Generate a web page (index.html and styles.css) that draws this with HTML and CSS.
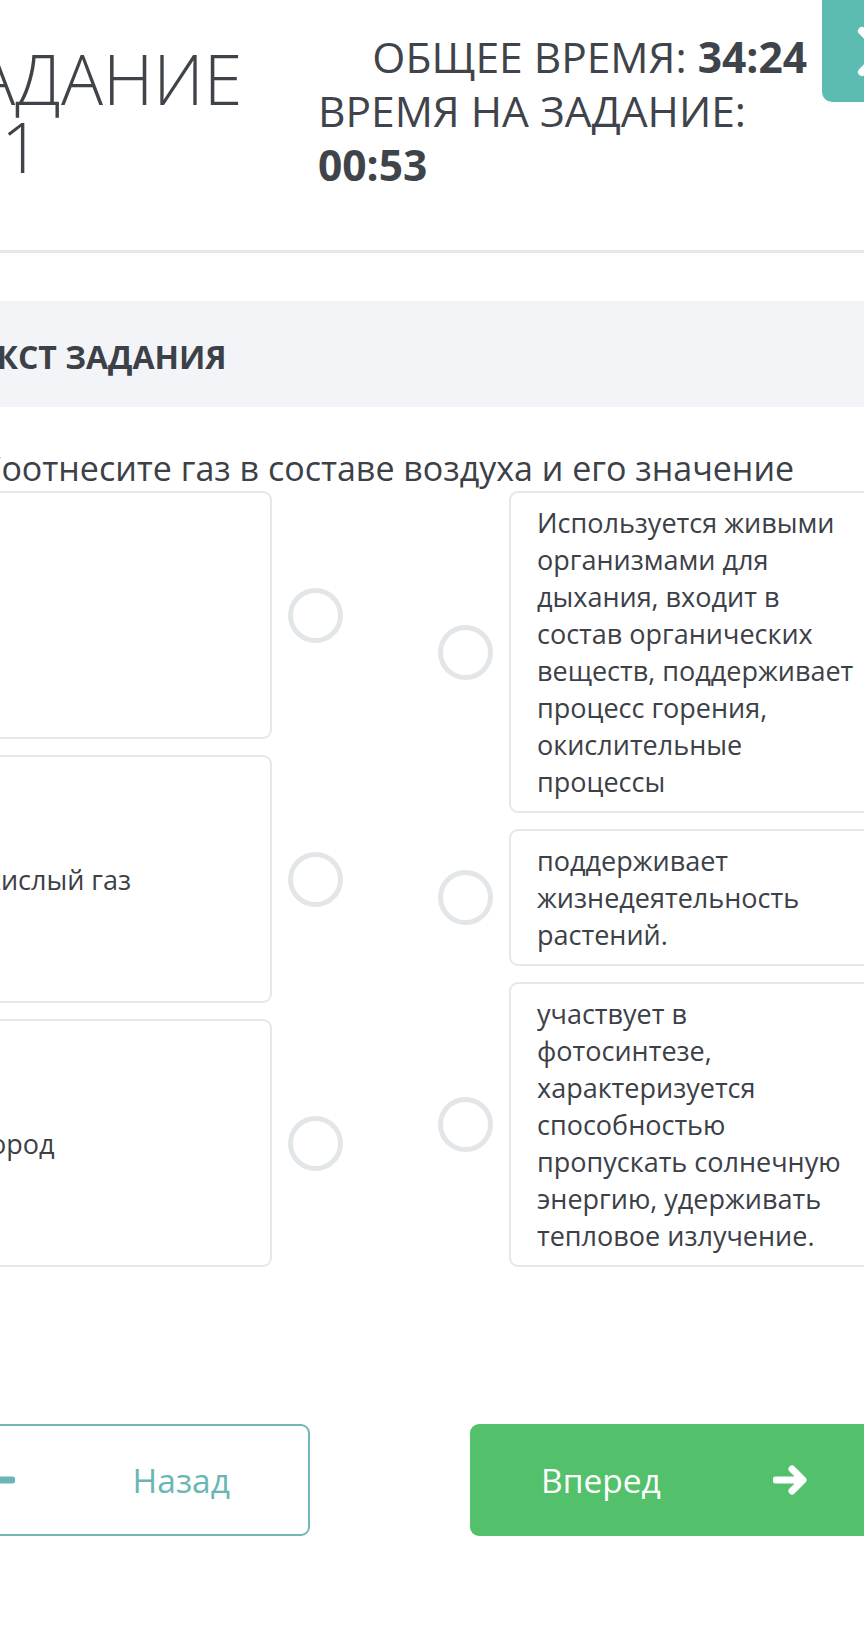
FILE: index.html
```html
<!DOCTYPE html>
<html lang="ru">
<head>
<meta charset="utf-8">
<title>Задание</title>
<link rel="stylesheet" href="styles.css">
</head>
<body>
<div class="page">
  <header class="header">
    <h1 class="title">ЗАДАНИЕ <span class="task-num">11</span></h1>
    <div class="timers">
      <span class="timer timer-total">ОБЩЕЕ ВРЕМЯ: <b>34:24</b></span>
      <span class="timer">ВРЕМЯ НА ЗАДАНИЕ: <b>00:53</b></span>
    </div>
    <div class="side-btn">
      <svg class="side-icon" width="58" height="102" viewBox="0 0 58 102"><path d="M40 31 L62 53 M40 72 L62 50" stroke="#fff" stroke-width="8" stroke-linecap="round" fill="none"/></svg>
    </div>
  </header>

  <div class="section-bar"><h2 class="section-title">ТЕКСТ ЗАДАНИЯ</h2></div>

  <p class="question">Соотнесите газ в составе воздуха и его значение</p>

  <div class="match">
    <div class="col col-left">
      <div class="row"><div class="card card-left">Азот</div><span class="dot"></span></div>
      <div class="row"><div class="card card-left">Углекислый газ</div><span class="dot"></span></div>
      <div class="row"><div class="card card-left">Кислород</div><span class="dot"></span></div>
    </div>
    <div class="col col-right">
      <div class="row"><span class="dot"></span><div class="card card-right">Используется живыми организмами для дыхания, входит в состав органических веществ, поддерживает процесс горения, окислительные процессы</div></div>
      <div class="row"><span class="dot"></span><div class="card card-right">поддерживает жизнедеятельность растений.</div></div>
      <div class="row"><span class="dot"></span><div class="card card-right">участвует в фотосинтезе, характеризуется способностью пропускать солнечную энергию, удерживать тепловое излучение.</div></div>
    </div>
  </div>

  <div class="nav">
    <button class="btn btn-back">
      <svg class="arrow" width="40" height="30" viewBox="0 0 40 30"><path d="M37 15 H5 M15 4 L4 15 L15 26" stroke="currentColor" stroke-width="7" stroke-linecap="round" stroke-linejoin="round" fill="none"/></svg>
      <span>Назад</span>
    </button>
    <button class="btn btn-next">
      <span>Вперед</span>
      <svg class="arrow" width="34" height="30" viewBox="0 0 34 30"><path d="M3 15 H29 M19 4 L30 15 L19 26" stroke="currentColor" stroke-width="7" stroke-linecap="round" stroke-linejoin="round" fill="none"/></svg>
    </button>
  </div>
</div>
</body>
</html>
```
FILE: styles.css
```css
html, body {
  margin: 0;
  padding: 0;
  background: #fff;
  overflow: hidden;
}
body {
  font-family: "Open Sans", "Noto Sans", sans-serif;
  color: #3c4047;
  width: 864px;
  height: 1627px;
}
.page {
  width: 1000px;
  margin-left: -110px;
}
.header {
  display: flex;
  align-items: flex-start;
  height: 250px;
  padding-left: 44px;
  padding-right: 10px;
  border-bottom: 3px solid #e6e7e9;
}
.title {
  margin: 44px 0 0;
  width: 330px;
  font-size: 70px;
  line-height: 68px;
  font-weight: 350;
  color: #3f434a;
}
.task-num {
  display: block;
  padding-left: 27px;
}
.timers {
  margin: 30px 0 0 auto;
  width: 489px;
  text-align: right;
  font-size: 42.5px;
  line-height: 54px;
  color: #3f434a;
}
.timer {
  display: inline-block;
  text-align: left;
}
.timer b {
  font-weight: 700;
}
.side-btn {
  flex: none;
  width: 58px;
  height: 102px;
  margin-left: 15px;
  background: #5dbcb1;
  border-radius: 0 0 0 10px;
  overflow: hidden;
}
.side-icon {
  display: block;
}
.section-bar {
  margin-top: 48px;
  height: 106px;
  background: #f3f4f7;
  display: flex;
  align-items: center;
  padding-left: 70px;
}
.section-title {
  margin: 0;
  font-size: 32px;
  font-weight: 700;
  color: #3c4047;
  padding-top: 4px;
}
.question {
  margin: 41px 0 0;
  padding-left: 90px;
  font-size: 34px;
  line-height: 40px;
  white-space: nowrap;
}
.match {
  margin: 3px 0 0 8px;
  display: flex;
  gap: 94px;
  align-items: stretch;
}
.col {
  display: flex;
  flex-direction: column;
  gap: 16px;
  width: 446px;
  flex: none;
}
.row {
  display: flex;
  align-items: center;
  gap: 16px;
}
.col-left .row {
  flex: 1;
  align-items: stretch;
}
.col-left .row .dot {
  align-self: center;
}
.card {
  border: 2px solid #e6e7e9;
  border-radius: 9px;
  font-size: 27px;
  line-height: 37px;
  color: #3c4047;
  box-sizing: border-box;
  flex: none;
}
.card-left {
  width: 374px;
  display: flex;
  align-items: center;
  padding: 12px 28px;
}
.card-right {
  width: 380px;
  padding: 11px 26px 11px 26px;
}
.dot {
  flex: none;
  width: 55px;
  height: 55px;
  box-sizing: border-box;
  border: 5px solid #e3e6e9;
  border-radius: 50%;
}
.nav {
  margin: 157px 0 0 12px;
  display: flex;
  gap: 160px;
}
.btn {
  flex: none;
  width: 408px;
  height: 112px;
  box-sizing: border-box;
  border-radius: 9px;
  display: flex;
  align-items: center;
  justify-content: space-between;
  padding: 0 71px;
  font-family: "Open Sans", "Noto Sans", sans-serif;
  font-size: 33.5px;
  cursor: pointer;
}
.btn-back {
  background: #fff;
  border: 2px solid #72b7b7;
  color: #6ab6b4;
  padding-left: 71px;
  padding-right: 78px;
}
.btn-next {
  background: #53c16b;
  border: none;
  color: #fff;
}
.arrow {
  display: block;
  flex: none;
}
```
